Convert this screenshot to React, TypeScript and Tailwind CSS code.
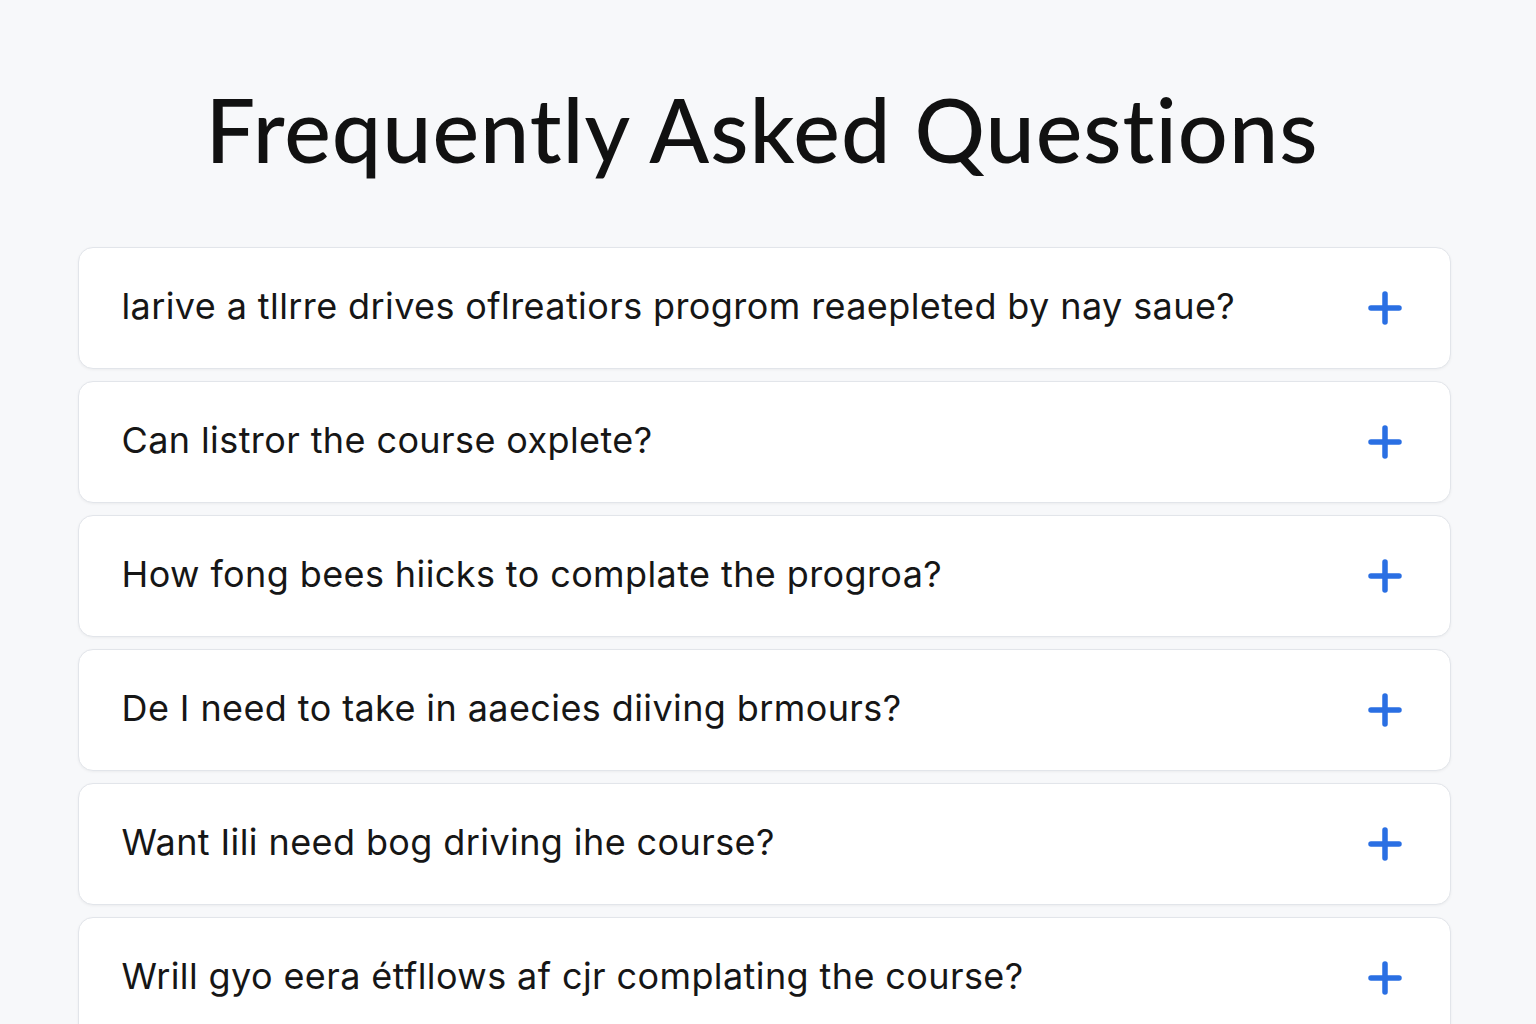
import React from "react";

const questions = [
  "larive a tllrre drives oflreatiors progrom reaepleted by nay saue?",
  "Can listror the course oxplete?",
  "How fong bees hiicks to complate the progroa?",
  "De I need to take in aaecies diiving brmours?",
  "Want \u0406il\u0456 need bog driving ihe course?",
  "Wrill gyo eera \u00e9tfllows af cjr complating the course?",
];

function Plus() {
  return (
    <svg width="34" height="34" viewBox="0 0 34 34" className="shrink-0">
      <path d="M17 3v28M3 17h28" stroke="#2a6fe3" strokeWidth="5.5" strokeLinecap="round" />
    </svg>
  );
}

export default function App() {
  return (
    <div className="min-h-[1024px] bg-[#f7f8fa] flex flex-col items-center overflow-hidden">
      <h1
        className="mt-[77px] ml-[-12px] text-[88px] leading-[104px] font-medium text-[#111] tracking-[1px]"
        style={{ fontFamily: "Lato, sans-serif" }}
      >
        Frequently Asked Questions
      </h1>
      <div className="mt-[66px] w-[1373px] ml-[-8px] flex flex-col gap-[12px]">
        {questions.map((q, i) => (
          <div
            key={i}
            className="h-[122px] bg-white rounded-[15px] border border-[#e2e5ea] shadow-[0_1px_3px_rgba(0,0,0,0.05)] flex items-center justify-between pl-[43px] pr-[48px] shrink-0"
          >
            <span
              className="text-[36px] text-[#161616] tracking-[0.4px] mt-[-4px]"
              style={{ fontFamily: "Inter, sans-serif" }}
            >
              {q}
            </span>
            <Plus />
          </div>
        ))}
      </div>
    </div>
  );
}
